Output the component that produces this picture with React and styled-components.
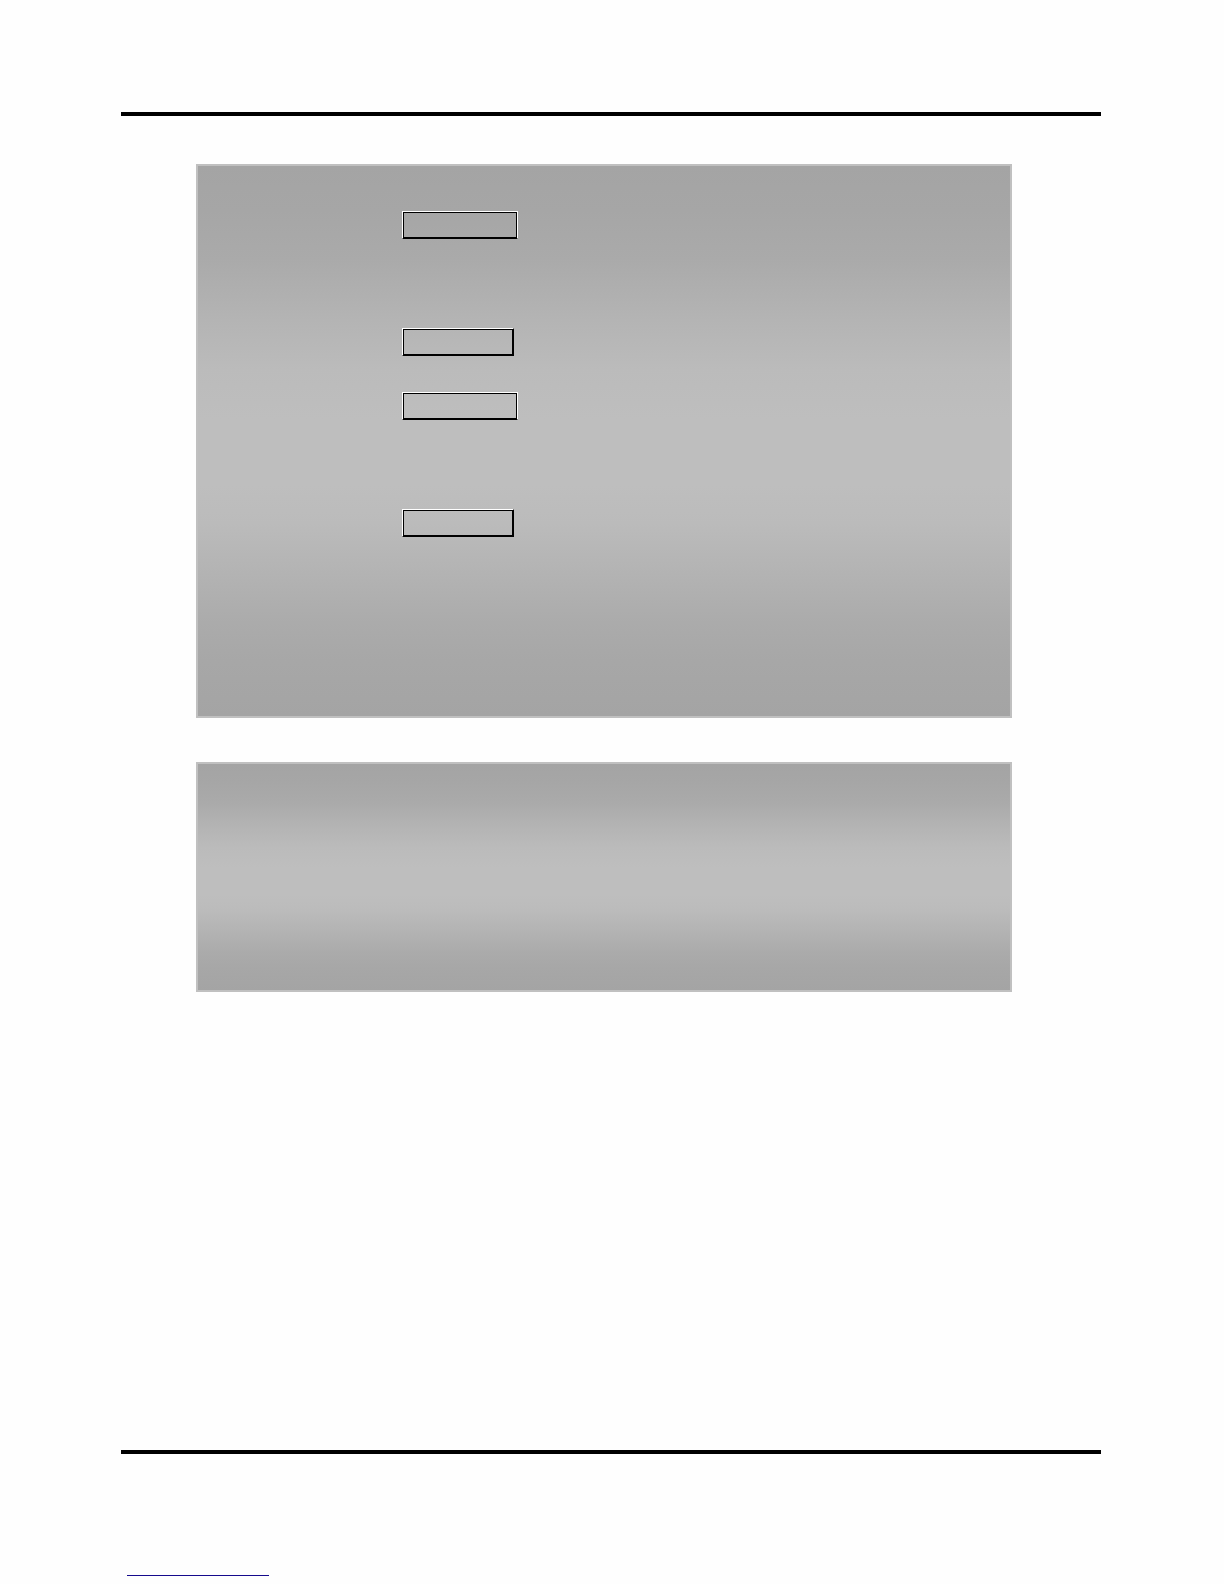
import styled, { createGlobalStyle } from "styled-components";

const App = () => {
    return (
        <>
            <GlobalStyle />
            <Page>
                <Rule />
                <Main>
                    <Panel>
                        <KeyGroups>
                            <KeyGroup>
                                <Key type="button" aria-label="First key" $wide />
                                <Key type="button" aria-label="Second key" />
                            </KeyGroup>
                            <KeyGroup>
                                <Key type="button" aria-label="Third key" $wide />
                                <Key type="button" aria-label="Fourth key" />
                            </KeyGroup>
                        </KeyGroups>
                    </Panel>
                    <Panel $short />
                </Main>
                <Footer>
                    <Rule />
                    <FooterLink href="#" aria-label="Website" />
                </Footer>
            </Page>
        </>
    )
}

const GlobalStyle = createGlobalStyle`
  body {
    margin: 0;
    background: #fefefe;
    font-family: "Liberation Sans", sans-serif;
  }
`

const Page = styled.div`
  display: flex;
  flex-direction: column;
  min-height: 100vh;
  padding: 112px 123px 8px 121px;
  box-sizing: border-box;
`

const Rule = styled.hr`
  width: 100%;
  height: 4px;
  margin: 0;
  border: 0;
  background: #000;
`

const Main = styled.main`
  display: flex;
  flex-direction: column;
  gap: 44px;
  padding: 48px 89px 48px 75px;
`

const Panel = styled.section`
  min-height: ${props => props.$short ? "230px" : "554px"};
  padding: 45px 24px 45px 204px;
  border: 2px solid #c0c0c0;
  background: linear-gradient(
    #a4a4a4 0%,
    #a6a6a6 8%,
    #aaaaaa 17%,
    #b4b4b4 28%,
    #bbbbbb 37%,
    #bebebe 46%,
    #bebebe 58%,
    #bbbbbb 65%,
    #b4b4b4 73%,
    #ababab 83%,
    #a7a7a7 90%,
    #a4a4a4 100%
  );
  box-sizing: border-box;
`

const KeyGroups = styled.div`
  display: flex;
  flex-direction: column;
  gap: 36px;
`

const KeyGroup = styled.div`
  display: flex;
  flex-direction: column;
  align-items: flex-start;
  gap: 89px;
`

const Key = styled.button`
  width: ${props => props.$wide ? "116px" : "112px"};
  height: 28px;
  padding: 0;
  border: 1px solid;
  border-color: #fff ${props => props.$wide ? "#fff" : "#000"} #000 #fff;
  border-radius: 0;
  background: transparent;
  box-shadow: inset 0 0 0 1px #000;
  box-sizing: border-box;
  cursor: pointer;
`

const Footer = styled.footer`
  display: flex;
  flex-direction: column;
  align-items: flex-start;
  gap: 121px;
  margin-top: auto;
`

const FooterLink = styled.a`
  width: 142px;
  height: 1px;
  margin-left: 6px;
  background: #150a8c;
`

export default App;
